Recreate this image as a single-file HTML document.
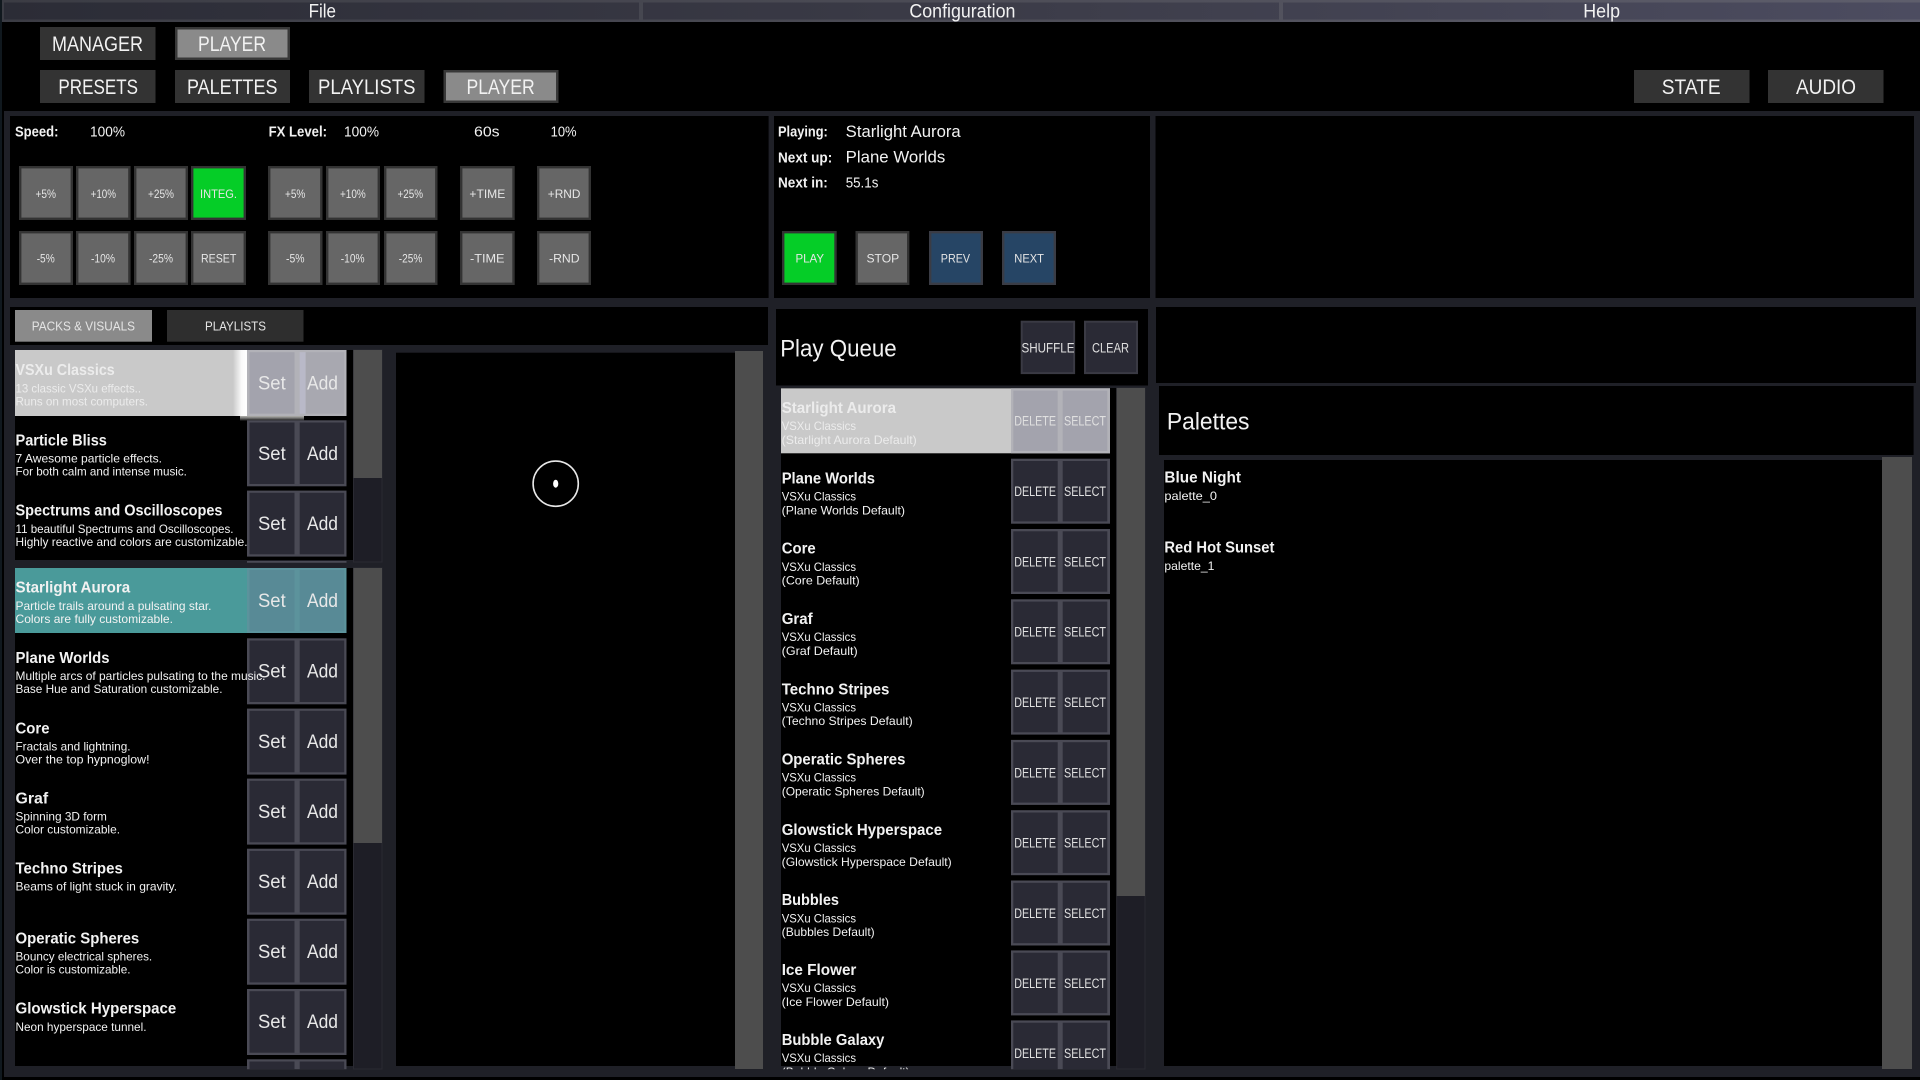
<!DOCTYPE html>
<html lang="en">
<head>
<meta charset="utf-8">
<title>VSXu Player</title>
<style>
html,body{margin:0;padding:0;background:#000;width:1920px;height:1080px;overflow:hidden}
svg{display:block;position:absolute;left:0;top:0}
text{font-family:"Liberation Sans",sans-serif;fill:#f2f2f2}
.m{font-size:19.5px}
.b{font-size:21.5px}
.l{font-size:14.5px;font-weight:bold}
.v{font-size:14.5px}
.n{font-size:16.5px}
.s{font-size:12px;fill:#e6e6e6}
.t{font-size:12.5px;fill:#e4e4e4}
.h{font-size:15.5px;font-weight:bold}
.d{font-size:12px}
.k{font-size:19.5px;fill:#e8e8e8}
.q{font-size:13.5px;fill:#e0e0e0}
.p{font-size:24px}
.sel{fill:#ececec}
</style>
</head>
<body>
<svg width="1920" height="1080" viewBox="0 0 1920 1080" xmlns="http://www.w3.org/2000/svg">
<defs>
<linearGradient id="menu" gradientUnits="userSpaceOnUse" x1="0" x2="1920" y1="0" y2="0"><stop offset="0" stop-color="#2b2c36"/><stop offset=".5" stop-color="#3b3b47"/><stop offset="1" stop-color="#4c4c60"/></linearGradient>
<linearGradient id="menuE" gradientUnits="userSpaceOnUse" x1="0" x2="1920" y1="0" y2="0"><stop offset="0" stop-color="#3b3c44"/><stop offset=".5" stop-color="#4c4c56"/><stop offset="1" stop-color="#5e5e6c"/></linearGradient>
<linearGradient id="glowR" x1="0" x2="1" y1="0" y2="0"><stop offset="0" stop-color="#fff" stop-opacity="0"/><stop offset=".6" stop-color="#fff" stop-opacity=".9"/><stop offset="1" stop-color="#fff"/></linearGradient>
<linearGradient id="glowB" x1="0" x2="0" y1="0" y2="1"><stop offset="0" stop-color="#c4c4c0" stop-opacity=".9"/><stop offset="1" stop-color="#fff" stop-opacity="0"/></linearGradient>
<g id="sa"><rect x="247" width="99.5" height="66" fill="#4a4a55"/><rect x="249.5" y="2.2" width="45" height="61.5" fill="#2a2a35"/><rect x="299.7" y="2.2" width="44.5" height="61.5" fill="#2a2a35"/></g>
<g id="ds"><rect x="1011" width="99" height="65" fill="#4a4a55"/><rect x="1013.3" y="2.3" width="44.4" height="60.4" fill="#2a2a35"/><rect x="1062.7" y="2.3" width="44.6" height="60.4" fill="#2a2a35"/></g>
<clipPath id="c1"><rect x="0" y="350" width="1920" height="212.7"/></clipPath>
<clipPath id="c2"><rect x="0" y="568" width="1920" height="501.3"/></clipPath>
<clipPath id="c3"><rect x="0" y="388" width="1920" height="681.3"/></clipPath>
</defs>

<rect width="1920" height="1080" fill="#000"/>
<rect x="0" y="0" width="2" height="1080" fill="#10181e"/>
<rect x="4" y="111" width="1916" height="966" fill="#1f2027"/>

<!-- menu -->
<rect x="2" y="0" width="1918" height="22" fill="url(#menuE)"/>
<rect x="4" y="2.5" width="635" height="17" fill="url(#menu)"/>
<rect x="643" y="2.5" width="636" height="17" fill="url(#menu)"/>
<rect x="1283" y="2.5" width="637" height="17" fill="url(#menu)"/>
<text class="m" x="308.6" y="17.7" textLength="27.4" lengthAdjust="spacingAndGlyphs">File</text>
<text class="m" x="909.4" y="17.7" textLength="106" lengthAdjust="spacingAndGlyphs">Configuration</text>
<text class="m" x="1583.3" y="17.7" textLength="36.7" lengthAdjust="spacingAndGlyphs">Help</text>

<!-- top nav -->
<rect x="40" y="27" width="115.5" height="33" fill="#333"/>
<text class="b" x="52" y="51.2" textLength="91" lengthAdjust="spacingAndGlyphs">MANAGER</text>
<rect x="175" y="27" width="115" height="33" fill="#383838"/><rect x="177.5" y="29.5" width="110" height="28" fill="#8a8a8a"/>
<text class="b" x="198" y="51.2" textLength="68" lengthAdjust="spacingAndGlyphs">PLAYER</text>
<rect x="40" y="70" width="115.5" height="33" fill="#333"/>
<text class="b" x="58.4" y="94.2" textLength="79.6" lengthAdjust="spacingAndGlyphs">PRESETS</text>
<rect x="175" y="70" width="115" height="33" fill="#333"/>
<text class="b" x="187" y="94.2" textLength="90.5" lengthAdjust="spacingAndGlyphs">PALETTES</text>
<rect x="309" y="70" width="115.5" height="33" fill="#333"/>
<text class="b" x="318" y="94.2" textLength="97.5" lengthAdjust="spacingAndGlyphs">PLAYLISTS</text>
<rect x="443.5" y="70" width="115" height="33" fill="#383838"/><rect x="446" y="72.5" width="110" height="28" fill="#8a8a8a"/>
<text class="b" x="466.5" y="94.2" textLength="68.2" lengthAdjust="spacingAndGlyphs">PLAYER</text>
<rect x="1634" y="70" width="115.5" height="33" fill="#333"/>
<text class="b" x="1661.7" y="94.2" textLength="59" lengthAdjust="spacingAndGlyphs">STATE</text>
<rect x="1768" y="70" width="115.5" height="33" fill="#333"/>
<text class="b" x="1796" y="94.2" textLength="60" lengthAdjust="spacingAndGlyphs">AUDIO</text>

<!-- panels -->
<rect x="10" y="116" width="758.6" height="182" fill="#000"/>
<rect x="774" y="116" width="376" height="182" fill="#000"/>
<rect x="1155.5" y="116" width="758.5" height="182" fill="#000"/>
<rect x="10" y="307" width="758" height="38" fill="#000"/>
<rect x="776" y="309" width="372" height="76.5" fill="#000"/>
<rect x="1156" y="307" width="760" height="76" fill="#000"/>
<rect x="1159" y="386" width="754.6" height="69" fill="#000"/>
<rect x="1164" y="460" width="718" height="606" fill="#000"/>
<rect x="1882" y="457" width="30" height="612" fill="#4d4d4d"/>
<rect x="396" y="352.7" width="339" height="713.3" fill="#000"/>
<rect x="735" y="351" width="28" height="718" fill="#4d4d4d"/>
<rect x="15" y="350" width="338.5" height="210" fill="#000"/>
<rect x="15" y="568" width="338.5" height="498" fill="#000"/>
<rect x="781" y="388" width="335.7" height="678" fill="#000"/>

<!-- controls labels -->
<text class="l" x="15" y="136.7" textLength="43.4" lengthAdjust="spacingAndGlyphs">Speed:</text>
<text class="v" x="90" y="136.7" textLength="35" lengthAdjust="spacingAndGlyphs">100%</text>
<text class="l" x="268.6" y="136.7" textLength="58.4" lengthAdjust="spacingAndGlyphs">FX Level:</text>
<text class="v" x="344" y="136.7" textLength="35" lengthAdjust="spacingAndGlyphs">100%</text>
<text class="v" x="474" y="136.7" textLength="25.6" lengthAdjust="spacingAndGlyphs">60s</text>
<text class="v" x="550.6" y="136.7" textLength="26" lengthAdjust="spacingAndGlyphs">10%</text>

<!-- control buttons -->
<g fill="#666" stroke="#333" stroke-width="2.4">
<rect x="20.2" y="167.2" width="51.6" height="51.6"/><rect x="77.2" y="167.2" width="52.2" height="51.6"/><rect x="135.2" y="167.2" width="51.6" height="51.6"/>
<rect x="192.2" y="167.2" width="52.6" height="51.6" fill="#05cd27"/>
<rect x="269.2" y="167.2" width="52.1" height="51.6"/><rect x="327.2" y="167.2" width="51.6" height="51.6"/><rect x="385.2" y="167.2" width="51.1" height="51.6"/>
<rect x="461.2" y="167.2" width="52.3" height="51.6"/><rect x="538.2" y="167.2" width="51.6" height="51.6"/>
<rect x="20.2" y="232.2" width="51.6" height="51.6"/><rect x="77.2" y="232.2" width="52.2" height="51.6"/><rect x="135.2" y="232.2" width="51.6" height="51.6"/>
<rect x="192.2" y="232.2" width="52.6" height="51.6"/>
<rect x="269.2" y="232.2" width="52.1" height="51.6"/><rect x="327.2" y="232.2" width="51.6" height="51.6"/><rect x="385.2" y="232.2" width="51.1" height="51.6"/>
<rect x="461.2" y="232.2" width="52.3" height="51.6"/><rect x="538.2" y="232.2" width="51.6" height="51.6"/>
<rect x="783.2" y="232.2" width="52.3" height="51.6" fill="#05cd27"/>
<rect x="856.7" y="232.2" width="51.5" height="51.6"/>
<rect x="930.2" y="232.2" width="51.6" height="51.6" fill="#264565" stroke="#3a3c45"/>
<rect x="1003.2" y="232.2" width="51.6" height="51.6" fill="#264565" stroke="#3a3c45"/>
</g>
<g>
<text class="s" x="35.5" y="198" textLength="20.5" lengthAdjust="spacingAndGlyphs">+5%</text>
<text class="s" x="90.6" y="198" textLength="25.4" lengthAdjust="spacingAndGlyphs">+10%</text>
<text class="s" x="148" y="198" textLength="26" lengthAdjust="spacingAndGlyphs">+25%</text>
<text class="s" x="200" y="198" textLength="37" lengthAdjust="spacingAndGlyphs">INTEG.</text>
<text class="s" x="285" y="198" textLength="20.3" lengthAdjust="spacingAndGlyphs">+5%</text>
<text class="s" x="340" y="198" textLength="25.7" lengthAdjust="spacingAndGlyphs">+10%</text>
<text class="s" x="397.5" y="198" textLength="25.5" lengthAdjust="spacingAndGlyphs">+25%</text>
<text class="s" x="469.4" y="198" textLength="35.9" lengthAdjust="spacingAndGlyphs">+TIME</text>
<text class="s" x="547.8" y="198" textLength="32.6" lengthAdjust="spacingAndGlyphs">+RND</text>
<text class="s" x="36.7" y="262.7" textLength="18" lengthAdjust="spacingAndGlyphs">-5%</text>
<text class="s" x="91" y="262.7" textLength="24" lengthAdjust="spacingAndGlyphs">-10%</text>
<text class="s" x="149" y="262.7" textLength="24" lengthAdjust="spacingAndGlyphs">-25%</text>
<text class="s" x="201" y="262.7" textLength="35.3" lengthAdjust="spacingAndGlyphs">RESET</text>
<text class="s" x="286" y="262.7" textLength="18.5" lengthAdjust="spacingAndGlyphs">-5%</text>
<text class="s" x="340.8" y="262.7" textLength="23.7" lengthAdjust="spacingAndGlyphs">-10%</text>
<text class="s" x="398.8" y="262.7" textLength="23.6" lengthAdjust="spacingAndGlyphs">-25%</text>
<text class="s" x="470" y="262.7" textLength="34.5" lengthAdjust="spacingAndGlyphs">-TIME</text>
<text class="s" x="549" y="262.7" textLength="30.6" lengthAdjust="spacingAndGlyphs">-RND</text>
<text class="s" x="795.5" y="262.7" textLength="28.5" lengthAdjust="spacingAndGlyphs">PLAY</text>
<text class="s" x="866.5" y="262.7" textLength="32.7" lengthAdjust="spacingAndGlyphs">STOP</text>
<text class="s" x="940.8" y="262.7" textLength="29.2" lengthAdjust="spacingAndGlyphs">PREV</text>
<text class="s" x="1014.3" y="262.7" textLength="29.7" lengthAdjust="spacingAndGlyphs">NEXT</text>
</g>

<!-- now playing -->
<text class="l" x="778" y="136.7" textLength="49.8" lengthAdjust="spacingAndGlyphs">Playing:</text>
<text class="n" x="845.7" y="137" textLength="115" lengthAdjust="spacingAndGlyphs">Starlight Aurora</text>
<text class="l" x="778" y="162.3" textLength="54.2" lengthAdjust="spacingAndGlyphs">Next up:</text>
<text class="n" x="845.7" y="162.3" textLength="99.6" lengthAdjust="spacingAndGlyphs">Plane Worlds</text>
<text class="l" x="778" y="187.7" textLength="49.8" lengthAdjust="spacingAndGlyphs">Next in:</text>
<text class="v" x="845.7" y="187.7" textLength="32.7" lengthAdjust="spacingAndGlyphs">55.1s</text>

<!-- tabs -->
<rect x="15" y="310" width="137" height="31.7" fill="#8a8a8a"/>
<text class="t" x="31.8" y="330.4" textLength="103.2" lengthAdjust="spacingAndGlyphs">PACKS &amp; VISUALS</text>
<rect x="167" y="310" width="136.5" height="31.7" fill="#2e2e2e"/>
<text class="t" x="205" y="330.4" textLength="61" lengthAdjust="spacingAndGlyphs">PLAYLISTS</text>

<!-- scrollbars in lists -->
<rect x="353.5" y="350" width="28.5" height="212" fill="#1e1e26" stroke="#2a2a32" stroke-width="1"/>
<rect x="353.5" y="350" width="28.5" height="128" fill="#4d4d4d"/>
<rect x="353.5" y="568" width="28.5" height="501" fill="#1e1e26" stroke="#2a2a32" stroke-width="1"/>
<rect x="353.5" y="568" width="28.5" height="275" fill="#4d4d4d"/>
<rect x="1116.7" y="388" width="28.3" height="681" fill="#1e1e26" stroke="#2a2a32" stroke-width="1"/>
<rect x="1116.7" y="388" width="28.3" height="508" fill="#4d4d4d"/>

<!-- pack list -->
<g clip-path="url(#c1)">
<g transform="translate(0,350)">
<rect x="15" width="331.5" height="66" fill="#c9c9c9"/>
<rect x="247" width="99.5" height="66" fill="#b2b2b8"/>
<rect x="249.5" y="2.2" width="45" height="61.5" fill="#a3a3ad"/>
<rect x="299.7" y="2.2" width="6" height="61.5" fill="#b9b9c8"/>
<rect x="305.7" y="2.2" width="38.5" height="61.5" fill="#a8a8b0"/>
<rect x="233" width="14" height="66" fill="url(#glowR)"/>
<rect x="240" y="66" width="64" height="5" fill="url(#glowB)"/>
<text class="h sel" x="15.5" y="25" textLength="99.2" lengthAdjust="spacingAndGlyphs">VSXu Classics</text>
<text class="d sel" x="15.5" y="42.4" textLength="125.5" lengthAdjust="spacingAndGlyphs">13 classic VSXu effects..</text>
<text class="d sel" x="15.5" y="55.4" textLength="132.5" lengthAdjust="spacingAndGlyphs">Runs on most computers.</text>
<text class="k" x="258" y="39.5" textLength="27.7" lengthAdjust="spacingAndGlyphs">Set</text>
<text class="k" x="307" y="39.5" textLength="31" lengthAdjust="spacingAndGlyphs">Add</text>
</g>
<g transform="translate(0,420.3)">
<use href="#sa"/>
<text class="h" x="15.5" y="25" textLength="91.4" lengthAdjust="spacingAndGlyphs">Particle Bliss</text>
<text class="d" x="15.5" y="42.4" textLength="146.5" lengthAdjust="spacingAndGlyphs">7 Awesome particle effects.</text>
<text class="d" x="15.5" y="55.4" textLength="171.4" lengthAdjust="spacingAndGlyphs">For both calm and intense music.</text>
<text class="k" x="258" y="39.5" textLength="27.7" lengthAdjust="spacingAndGlyphs">Set</text>
<text class="k" x="307" y="39.5" textLength="31" lengthAdjust="spacingAndGlyphs">Add</text>
</g>
<g transform="translate(0,490.6)">
<use href="#sa"/>
<text class="h" x="15.5" y="25" textLength="207" lengthAdjust="spacingAndGlyphs">Spectrums and Oscilloscopes</text>
<text class="d" x="15.5" y="42.2" textLength="218" lengthAdjust="spacingAndGlyphs">11 beautiful Spectrums and Oscilloscopes.</text>
<text class="d" x="15.5" y="55.2" textLength="232" lengthAdjust="spacingAndGlyphs">Highly reactive and colors are customizable.</text>
<text class="k" x="258" y="39.5" textLength="27.7" lengthAdjust="spacingAndGlyphs">Set</text>
<text class="k" x="307" y="39.5" textLength="31" lengthAdjust="spacingAndGlyphs">Add</text>
</g>
<g transform="translate(0,561)"><use href="#sa"/></g>
</g>

<g clip-path="url(#c2)">
<g transform="translate(0,568)">
<rect x="15" width="331.5" height="65" fill="#4a9a9a"/>
<rect x="247" width="99.5" height="65" fill="#5c939c"/>
<rect x="249.5" y="2" width="45" height="61" fill="#588a96"/>
<rect x="299.7" y="2" width="44.5" height="61" fill="#588a96"/>
<text class="h" x="15.5" y="24.7" textLength="114.7" lengthAdjust="spacingAndGlyphs">Starlight Aurora</text>
<text class="d" x="15.5" y="41.9" textLength="196" lengthAdjust="spacingAndGlyphs">Particle trails around a pulsating star.</text>
<text class="d" x="15.5" y="54.9" textLength="157.5" lengthAdjust="spacingAndGlyphs">Colors are fully customizable.</text>
<text class="k" x="258" y="39.2" textLength="27.7" lengthAdjust="spacingAndGlyphs">Set</text>
<text class="k" x="307" y="39.2" textLength="31" lengthAdjust="spacingAndGlyphs">Add</text>
</g>
<g transform="translate(0,638.3)">
<use href="#sa"/>
<text class="h" x="15.5" y="24.7" textLength="94" lengthAdjust="spacingAndGlyphs">Plane Worlds</text>
<text class="d" x="15.5" y="41.9" textLength="250" lengthAdjust="spacingAndGlyphs">Multiple arcs of particles pulsating to the music.</text>
<text class="d" x="15.5" y="54.9" textLength="207" lengthAdjust="spacingAndGlyphs">Base Hue and Saturation customizable.</text>
<text class="k" x="258" y="39.2" textLength="27.7" lengthAdjust="spacingAndGlyphs">Set</text>
<text class="k" x="307" y="39.2" textLength="31" lengthAdjust="spacingAndGlyphs">Add</text>
</g>
<g transform="translate(0,708.6)">
<use href="#sa"/>
<text class="h" x="15.5" y="24.7" textLength="34" lengthAdjust="spacingAndGlyphs">Core</text>
<text class="d" x="15.5" y="41.9" textLength="115" lengthAdjust="spacingAndGlyphs">Fractals and lightning.</text>
<text class="d" x="15.5" y="54.9" textLength="134" lengthAdjust="spacingAndGlyphs">Over the top hypnoglow!</text>
<text class="k" x="258" y="39.2" textLength="27.7" lengthAdjust="spacingAndGlyphs">Set</text>
<text class="k" x="307" y="39.2" textLength="31" lengthAdjust="spacingAndGlyphs">Add</text>
</g>
<g transform="translate(0,778.6)">
<use href="#sa"/>
<text class="h" x="15.5" y="24.7" textLength="32.6" lengthAdjust="spacingAndGlyphs">Graf</text>
<text class="d" x="15.5" y="41.9" textLength="91.4" lengthAdjust="spacingAndGlyphs">Spinning 3D form</text>
<text class="d" x="15.5" y="54.9" textLength="104.5" lengthAdjust="spacingAndGlyphs">Color customizable.</text>
<text class="k" x="258" y="39.2" textLength="27.7" lengthAdjust="spacingAndGlyphs">Set</text>
<text class="k" x="307" y="39.2" textLength="31" lengthAdjust="spacingAndGlyphs">Add</text>
</g>
<g transform="translate(0,848.7)">
<use href="#sa"/>
<text class="h" x="15.5" y="24.7" textLength="107.3" lengthAdjust="spacingAndGlyphs">Techno Stripes</text>
<text class="d" x="15.5" y="41.9" textLength="161.6" lengthAdjust="spacingAndGlyphs">Beams of light stuck in gravity.</text>
<text class="k" x="258" y="39.2" textLength="27.7" lengthAdjust="spacingAndGlyphs">Set</text>
<text class="k" x="307" y="39.2" textLength="31" lengthAdjust="spacingAndGlyphs">Add</text>
</g>
<g transform="translate(0,918.7)">
<use href="#sa"/>
<text class="h" x="15.5" y="24.7" textLength="123.7" lengthAdjust="spacingAndGlyphs">Operatic Spheres</text>
<text class="d" x="15.5" y="41.9" textLength="136.7" lengthAdjust="spacingAndGlyphs">Bouncy electrical spheres.</text>
<text class="d" x="15.5" y="54.9" textLength="115" lengthAdjust="spacingAndGlyphs">Color is customizable.</text>
<text class="k" x="258" y="39.2" textLength="27.7" lengthAdjust="spacingAndGlyphs">Set</text>
<text class="k" x="307" y="39.2" textLength="31" lengthAdjust="spacingAndGlyphs">Add</text>
</g>
<g transform="translate(0,989)">
<use href="#sa"/>
<text class="h" x="15.5" y="24.7" textLength="160.8" lengthAdjust="spacingAndGlyphs">Glowstick Hyperspace</text>
<text class="d" x="15.5" y="41.9" textLength="131" lengthAdjust="spacingAndGlyphs">Neon hyperspace tunnel.</text>
<text class="k" x="258" y="39.2" textLength="27.7" lengthAdjust="spacingAndGlyphs">Set</text>
<text class="k" x="307" y="39.2" textLength="31" lengthAdjust="spacingAndGlyphs">Add</text>
</g>
<g transform="translate(0,1059.3)"><use href="#sa"/></g>
</g>

<!-- preview -->
<ellipse cx="555.7" cy="483.7" rx="22.6" ry="22.6" fill="none" stroke="#e8e8e8" stroke-width="1.6"/>
<ellipse cx="555.7" cy="483.7" rx="2.6" ry="4" fill="#fff"/>

<!-- play queue -->
<text class="p" x="780.2" y="356.7" textLength="116.5" lengthAdjust="spacingAndGlyphs">Play Queue</text>
<rect x="1021.7" y="321.7" width="52.4" height="51.4" fill="#2a2a35" stroke="#3a3a44" stroke-width="2"/>
<rect x="1085" y="321.7" width="52" height="51.4" fill="#2a2a35" stroke="#3a3a44" stroke-width="2"/>
<text class="q" x="1021.5" y="352.7" textLength="53" lengthAdjust="spacingAndGlyphs">SHUFFLE</text>
<text class="q" x="1092" y="352.7" textLength="37" lengthAdjust="spacingAndGlyphs">CLEAR</text>

<g clip-path="url(#c3)">
<g transform="translate(0,388.3)">
<rect x="781" width="329" height="65" fill="#c9c9c9"/>
<rect x="1011" width="99" height="65" fill="#b2b2b8"/>
<rect x="1013.3" y="2.3" width="44.4" height="60.4" fill="#a3a3ad"/>
<rect x="1062.7" y="2.3" width="44.6" height="60.4" fill="#a3a3ad"/>
<text class="h sel" x="781.7" y="24.7" textLength="114.3" lengthAdjust="spacingAndGlyphs">Starlight Aurora</text>
<text class="d sel" x="781.7" y="41.8" textLength="74.3" lengthAdjust="spacingAndGlyphs">VSXu Classics</text>
<text class="d sel" x="781.7" y="55.6" textLength="135" lengthAdjust="spacingAndGlyphs">(Starlight Aurora Default)</text>
<text class="q" x="1014.3" y="37.4" textLength="41.7" lengthAdjust="spacingAndGlyphs">DELETE</text>
<text class="q" x="1064" y="37.4" textLength="42" lengthAdjust="spacingAndGlyphs">SELECT</text>
</g>
<g transform="translate(0,458.7)">
<use href="#ds"/>
<text class="h" x="781.7" y="24.7" textLength="93.3" lengthAdjust="spacingAndGlyphs">Plane Worlds</text>
<text class="d" x="781.7" y="41.8" textLength="74.3" lengthAdjust="spacingAndGlyphs">VSXu Classics</text>
<text class="d" x="781.7" y="55.6" textLength="123.3" lengthAdjust="spacingAndGlyphs">(Plane Worlds Default)</text>
<text class="q" x="1014.3" y="37.4" textLength="41.7" lengthAdjust="spacingAndGlyphs">DELETE</text>
<text class="q" x="1064" y="37.4" textLength="42" lengthAdjust="spacingAndGlyphs">SELECT</text>
</g>
<g transform="translate(0,529)">
<use href="#ds"/>
<text class="h" x="781.7" y="24.7" textLength="34" lengthAdjust="spacingAndGlyphs">Core</text>
<text class="d" x="781.7" y="41.8" textLength="74.3" lengthAdjust="spacingAndGlyphs">VSXu Classics</text>
<text class="d" x="781.7" y="55.6" textLength="78" lengthAdjust="spacingAndGlyphs">(Core Default)</text>
<text class="q" x="1014.3" y="37.4" textLength="41.7" lengthAdjust="spacingAndGlyphs">DELETE</text>
<text class="q" x="1064" y="37.4" textLength="42" lengthAdjust="spacingAndGlyphs">SELECT</text>
</g>
<g transform="translate(0,599.3)">
<use href="#ds"/>
<text class="h" x="781.7" y="24.7" textLength="31" lengthAdjust="spacingAndGlyphs">Graf</text>
<text class="d" x="781.7" y="41.8" textLength="74.3" lengthAdjust="spacingAndGlyphs">VSXu Classics</text>
<text class="d" x="781.7" y="55.6" textLength="76" lengthAdjust="spacingAndGlyphs">(Graf Default)</text>
<text class="q" x="1014.3" y="37.4" textLength="41.7" lengthAdjust="spacingAndGlyphs">DELETE</text>
<text class="q" x="1064" y="37.4" textLength="42" lengthAdjust="spacingAndGlyphs">SELECT</text>
</g>
<g transform="translate(0,669.6)">
<use href="#ds"/>
<text class="h" x="781.7" y="24.7" textLength="107.7" lengthAdjust="spacingAndGlyphs">Techno Stripes</text>
<text class="d" x="781.7" y="41.8" textLength="74.3" lengthAdjust="spacingAndGlyphs">VSXu Classics</text>
<text class="d" x="781.7" y="55.6" textLength="131" lengthAdjust="spacingAndGlyphs">(Techno Stripes Default)</text>
<text class="q" x="1014.3" y="37.4" textLength="41.7" lengthAdjust="spacingAndGlyphs">DELETE</text>
<text class="q" x="1064" y="37.4" textLength="42" lengthAdjust="spacingAndGlyphs">SELECT</text>
</g>
<g transform="translate(0,739.9)">
<use href="#ds"/>
<text class="h" x="781.7" y="24.7" textLength="123.7" lengthAdjust="spacingAndGlyphs">Operatic Spheres</text>
<text class="d" x="781.7" y="41.8" textLength="74.3" lengthAdjust="spacingAndGlyphs">VSXu Classics</text>
<text class="d" x="781.7" y="55.6" textLength="143" lengthAdjust="spacingAndGlyphs">(Operatic Spheres Default)</text>
<text class="q" x="1014.3" y="37.4" textLength="41.7" lengthAdjust="spacingAndGlyphs">DELETE</text>
<text class="q" x="1064" y="37.4" textLength="42" lengthAdjust="spacingAndGlyphs">SELECT</text>
</g>
<g transform="translate(0,810.2)">
<use href="#ds"/>
<text class="h" x="781.7" y="24.7" textLength="160.4" lengthAdjust="spacingAndGlyphs">Glowstick Hyperspace</text>
<text class="d" x="781.7" y="41.8" textLength="74.3" lengthAdjust="spacingAndGlyphs">VSXu Classics</text>
<text class="d" x="781.7" y="55.6" textLength="170" lengthAdjust="spacingAndGlyphs">(Glowstick Hyperspace Default)</text>
<text class="q" x="1014.3" y="37.4" textLength="41.7" lengthAdjust="spacingAndGlyphs">DELETE</text>
<text class="q" x="1064" y="37.4" textLength="42" lengthAdjust="spacingAndGlyphs">SELECT</text>
</g>
<g transform="translate(0,880.5)">
<use href="#ds"/>
<text class="h" x="781.7" y="24.7" textLength="57.3" lengthAdjust="spacingAndGlyphs">Bubbles</text>
<text class="d" x="781.7" y="41.8" textLength="74.3" lengthAdjust="spacingAndGlyphs">VSXu Classics</text>
<text class="d" x="781.7" y="55.6" textLength="93" lengthAdjust="spacingAndGlyphs">(Bubbles Default)</text>
<text class="q" x="1014.3" y="37.4" textLength="41.7" lengthAdjust="spacingAndGlyphs">DELETE</text>
<text class="q" x="1064" y="37.4" textLength="42" lengthAdjust="spacingAndGlyphs">SELECT</text>
</g>
<g transform="translate(0,950.4)">
<use href="#ds"/>
<text class="h" x="781.7" y="24.7" textLength="74.7" lengthAdjust="spacingAndGlyphs">Ice Flower</text>
<text class="d" x="781.7" y="41.8" textLength="74.3" lengthAdjust="spacingAndGlyphs">VSXu Classics</text>
<text class="d" x="781.7" y="55.6" textLength="107.3" lengthAdjust="spacingAndGlyphs">(Ice Flower Default)</text>
<text class="q" x="1014.3" y="37.4" textLength="41.7" lengthAdjust="spacingAndGlyphs">DELETE</text>
<text class="q" x="1064" y="37.4" textLength="42" lengthAdjust="spacingAndGlyphs">SELECT</text>
</g>
<g transform="translate(0,1020.4)">
<use href="#ds"/>
<text class="h" x="781.7" y="24.7" textLength="102.7" lengthAdjust="spacingAndGlyphs">Bubble Galaxy</text>
<text class="d" x="781.7" y="41.8" textLength="74.3" lengthAdjust="spacingAndGlyphs">VSXu Classics</text>
<text class="d" x="781.7" y="55.6" textLength="128" lengthAdjust="spacingAndGlyphs">(Bubble Galaxy Default)</text>
<text class="q" x="1014.3" y="37.4" textLength="41.7" lengthAdjust="spacingAndGlyphs">DELETE</text>
<text class="q" x="1064" y="37.4" textLength="42" lengthAdjust="spacingAndGlyphs">SELECT</text>
</g>
</g>

<!-- palettes -->
<text class="p" x="1166.9" y="429.3" textLength="82.6" lengthAdjust="spacingAndGlyphs">Palettes</text>
<text class="h" x="1164.4" y="482.7" textLength="76.6" lengthAdjust="spacingAndGlyphs">Blue Night</text>
<text class="d" x="1164.4" y="500" textLength="52.6" lengthAdjust="spacingAndGlyphs">palette_0</text>
<text class="h" x="1164.4" y="552.7" textLength="110" lengthAdjust="spacingAndGlyphs">Red Hot Sunset</text>
<text class="d" x="1164.4" y="570" textLength="50" lengthAdjust="spacingAndGlyphs">palette_1</text>
</svg>
</body>
</html>
